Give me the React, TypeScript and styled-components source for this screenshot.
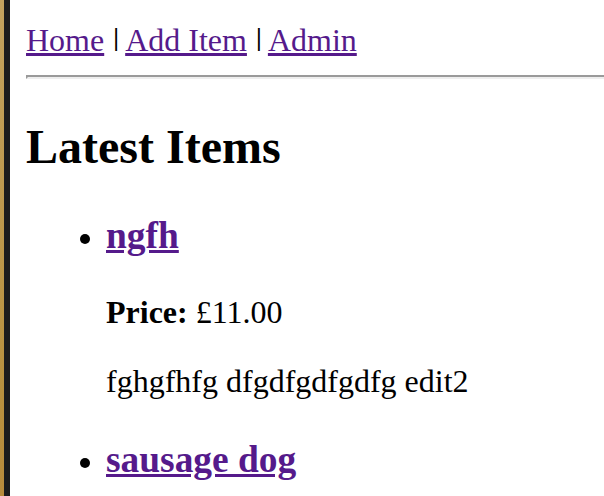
import React from "react";
import styled, { createGlobalStyle } from "styled-components";

const Global = createGlobalStyle`
  html, body {
    margin: 0;
    padding: 0;
    overflow: hidden;
    background: #ffffff;
  }
`;

const Page = styled.div`
  display: flex;
  min-height: 100vh;
  font-family: "Liberation Serif", "Times New Roman", serif;
  font-size: 32px;
  color: #000;
`;

const Edge = styled.div`
  flex: 0 0 10px;
  display: flex;
`;

const EdgeGold = styled.div`
  flex: 0 0 4px;
  background: linear-gradient(180deg, #c3a25e 0%, #b8913f 60%, #b98338 100%);
`;

const EdgeDark = styled.div`
  flex: 1;
  background: #1c1c1c;
`;

const Content = styled.div`
  flex: 1;
  min-width: 0;
  padding: 22px 0 0 16px;
`;

const Nav = styled.nav`
  white-space: nowrap;
`;

const NavLink = styled.a`
  color: #551a8b;
  text-decoration: underline;
`;

const Separator = styled.span`
  font-size: 26px;
  font-weight: bold;
  vertical-align: 5px;
  padding-left: 1px;
`;

const Rule = styled.hr`
  margin: 16px 0;
  border: none;
  border-top: 2px solid #9a9a9a;
  border-left: 2px solid #9a9a9a;
  border-bottom: 2px solid #eeeeee;
  height: 0;
`;

const Title = styled.h2`
  font-size: 1.5em;
  font-weight: bold;
  margin: 0.83em 0;
`;

const ItemList = styled.ul`
  list-style: disc;
  margin: 0;
  padding-left: 80px;
`;

const Item = styled.li``;

const ItemTitle = styled.h3`
  font-size: 1.17em;
  font-weight: bold;
  margin: 1em 0;
`;

const ItemLink = styled.a`
  color: #551a8b;
  text-decoration: underline;
`;

const Para = styled.p`
  margin: 1em 0;
`;

const items = [
  { name: "ngfh", price: "£11.00", desc: "fghgfhfg dfgdfgdfgdfg edit2" },
  { name: "sausage dog", price: "£5.00", desc: "a long dog" },
];

export default function App() {
  return (
    <>
      <Global />
      <Page>
        <Edge>
          <EdgeGold />
          <EdgeDark />
        </Edge>
        <Content>
          <Nav>
            <NavLink href="#">Home</NavLink> <Separator>|</Separator>{" "}
            <NavLink href="#">Add Item</NavLink> <Separator>|</Separator>{" "}
            <NavLink href="#">Admin</NavLink>
          </Nav>
          <Rule />
          <Title>Latest Items</Title>
          <ItemList>
            {items.map((it) => (
              <Item key={it.name}>
                <ItemTitle>
                  <ItemLink href="#">{it.name}</ItemLink>
                </ItemTitle>
                <Para>
                  <b>Price:</b> {it.price}
                </Para>
                <Para>{it.desc}</Para>
              </Item>
            ))}
          </ItemList>
        </Content>
      </Page>
    </>
  );
}
